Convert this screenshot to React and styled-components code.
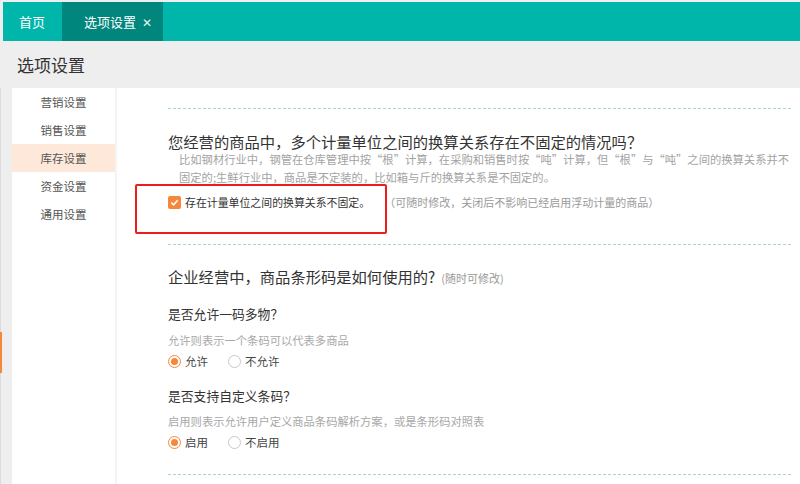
import styled, { createGlobalStyle } from "styled-components";

const GlobalStyle = createGlobalStyle`
  html, body {
    margin: 0;
    padding: 0;
    background: #eeeeee;
  }
  body {
    font-family: "Noto Sans CJK SC", "Noto Sans", sans-serif;
  }
`;

const orange = "#f6883c";

const Frame = styled.div`
  position: relative;
  width: 800px;
  height: 484px;
  box-sizing: border-box;
  padding-top: 2px;
  background: #eeeeee;
  display: flex;
  flex-direction: column;
  overflow: hidden;
`;

const EdgeMark = styled.div`
  position: absolute;
  z-index: 5;
  left: 0;
  top: 332px;
  width: 2px;
  height: 41px;
  background: ${orange};
`;

const TopBar = styled.div`
  margin-left: 3px;
  height: 39px;
  background: #00b5aa;
  display: flex;
  align-items: stretch;
`;

const Tab = styled.div`
  display: flex;
  align-items: center;
  gap: 6px;
  padding: ${(p) => (p.$active ? "0 11px 0 22px" : "0 17px 0 16px")};
  background: ${(p) => (p.$active ? "#00867c" : "transparent")};
  color: #fff;
  font-size: 13px;
  line-height: 1;
`;

const Close = styled.span`
  font-size: 12px;
  opacity: 0.9;
`;

const PageHeader = styled.div`
  height: 47px;
  display: flex;
  align-items: center;
  padding-left: 17px;
  font-size: 17px;
  color: #333;
`;

const Body = styled.div`
  flex: 1;
  display: flex;
  padding-left: 12px;
  min-height: 0;
  border-left: 1px solid #dcdcdc;
`;

const Sidebar = styled.ul`
  list-style: none;
  margin: 0 0 0 -1px;
  padding: 0;
  width: 103px;
  background: #fff;
  border-right: 2px solid #f4f4f4;
`;

const SideItem = styled.li`
  height: 28px;
  display: flex;
  align-items: center;
  justify-content: center;
  font-size: 11.5px;
  color: #555;
  background: ${(p) => (p.$active ? "#fde8da" : "transparent")};
`;

const Content = styled.div`
  flex: 1;
  background: #fff;
  padding: 20px 9px 0 51px;
  display: flex;
  flex-direction: column;
`;

const Dashed = styled.div`
  height: 1px;
  flex-shrink: 0;
  margin-top: ${(p) => p.$mt || 0}px;
  background: repeating-linear-gradient(
    90deg,
    #a9d5cf 0 3px,
    transparent 3px 5px
  );
`;

const Section = styled.div`
  position: relative;
  display: flex;
  flex-direction: column;
`;

const Heading = styled.div`
  margin-top: ${(p) => p.$mt}px;
  font-size: 15.3px;
  line-height: 20px;
  color: #333;
  white-space: nowrap;
  display: flex;
  align-items: baseline;
`;

const HeadingNote = styled.span`
  margin-left: 6px;
  font-size: 11px;
  color: #999;
`;

const Desc = styled.div`
  margin-top: ${(p) => (p.$first ? -1 : 0)}px;
  padding-left: 11px;
  font-size: 11.3px;
  line-height: 18px;
  color: #a3a3a3;
  white-space: nowrap;
`;

const CheckRow = styled.label`
  margin-top: 7px;
  height: 18px;
  display: flex;
  align-items: center;
  font-size: 10.9px;
  color: #333;
  white-space: nowrap;
`;

const CheckBox = styled.span`
  width: 13px;
  height: 13px;
  border-radius: 2px;
  background: ${orange};
  display: flex;
  align-items: center;
  justify-content: center;
  margin-right: 4px;
`;

const CheckHint = styled.span`
  margin-left: 14px;
  color: #9a9a9a;
  font-size: 11px;
`;

const Highlight = styled.div`
  position: absolute;
  left: -33px;
  top: 75px;
  width: 248px;
  height: 46px;
  border: 2px solid #ef1c1c;
  border-radius: 2px;
`;

const Question = styled.div`
  margin-top: ${(p) => p.$mt}px;
  font-size: 12.8px;
  line-height: 18px;
  color: #333;
  white-space: nowrap;
`;

const Note = styled.div`
  margin-top: ${(p) => p.$mt}px;
  font-size: 11.3px;
  line-height: 16px;
  color: #a8a8a8;
  white-space: nowrap;
`;

const RadioRow = styled.div`
  margin-top: 5px;
  height: 16px;
  display: flex;
  align-items: center;
  gap: 20px;
`;

const RadioOption = styled.label`
  display: flex;
  align-items: center;
  gap: 4px;
  font-size: 11.5px;
  color: #444;
`;

const RadioDot = styled.span`
  width: 13px;
  height: 13px;
  box-sizing: border-box;
  border-radius: 50%;
  border: 1px solid ${(p) => (p.$on ? orange : "#c8c8c8")};
  display: flex;
  align-items: center;
  justify-content: center;
  &::after {
    content: "";
    width: 7px;
    height: 7px;
    border-radius: 50%;
    background: ${(p) => (p.$on ? orange : "transparent")};
  }
`;

const sideItems = ["营销设置", "销售设置", "库存设置", "资金设置", "通用设置"];

const Radio = ({ on, children }) => (
  <RadioOption>
    <RadioDot $on={on} />
    {children}
  </RadioOption>
);

export default function App() {
  return (
    <>
      <GlobalStyle />
      <Frame>
        <EdgeMark />
        <TopBar>
          <Tab>首页</Tab>
          <Tab $active>
            选项设置<Close>✕</Close>
          </Tab>
        </TopBar>
        <PageHeader>选项设置</PageHeader>
        <Body>
          <Sidebar>
            {sideItems.map((s) => (
              <SideItem key={s} $active={s === "库存设置"}>
                {s}
              </SideItem>
            ))}
          </Sidebar>
          <Content>
            <Dashed />
            <Section>
              <Heading $mt={22}>
                您经营的商品中，多个计量单位之间的换算关系存在不固定的情况吗？
              </Heading>
              <Desc $first>
                比如钢材行业中，钢管在仓库管理中按“根”计算，在采购和销售时按“吨”计算，但“根”与“吨”之间的换算关系并不
              </Desc>
              <Desc>
                固定的;生鲜行业中，商品是不定装的，比如箱与斤的换算关系是不固定的。
              </Desc>
              <CheckRow>
                <CheckBox>
                  <svg width="9" height="9" viewBox="0 0 10 10">
                    <polyline
                      points="1.5,5.2 4,7.5 8.5,2.5"
                      fill="none"
                      stroke="#fff"
                      strokeWidth="1.8"
                    />
                  </svg>
                </CheckBox>
                存在计量单位之间的换算关系不固定。
                <CheckHint>（可随时修改，关闭后不影响已经启用浮动计量的商品）</CheckHint>
              </CheckRow>
              <Highlight />
            </Section>
            <Dashed $mt={33} />
            <Section>
              <Heading $mt={21}>
                企业经营中，商品条形码是如何使用的?
                <HeadingNote>(随时可修改)</HeadingNote>
              </Heading>
              <Question $mt={17}>是否允许一码多物？</Question>
              <Note $mt={9}>允许则表示一个条码可以代表多商品</Note>
              <RadioRow>
                <Radio on>允许</Radio>
                <Radio>不允许</Radio>
              </RadioRow>
              <Question $mt={18}>是否支持自定义条码？</Question>
              <Note $mt={8}>启用则表示允许用户定义商品条码解析方案，或是条形码对照表</Note>
              <RadioRow>
                <Radio on>启用</Radio>
                <Radio>不启用</Radio>
              </RadioRow>
            </Section>
            <Dashed $mt={24} />
          </Content>
        </Body>
      </Frame>
    </>
  );
}
